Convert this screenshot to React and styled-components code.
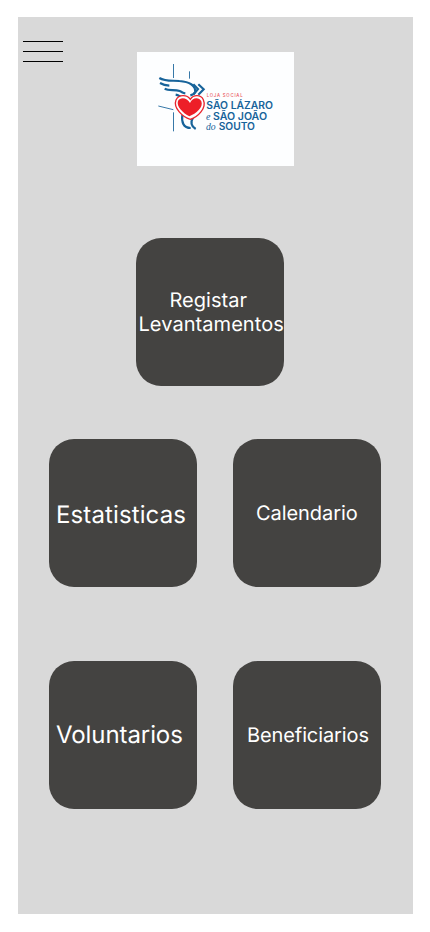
import React from "react";
import styled, { createGlobalStyle } from "styled-components";

const GlobalStyle = createGlobalStyle`
  *, *::before, *::after { box-sizing: border-box; }
  body { margin: 0; background: #fff; font-family: Inter, sans-serif; }
`;

const Screen = styled.main`
  width: 395px;
  height: 897px;
  margin: 17px 0 0 18px;
  background: #d9d9d9;
  display: flex;
  flex-direction: column;
`;

const Header = styled.header`
  display: flex;
  align-items: flex-start;
  height: 221px;
  padding: 24px 0 0 5px;
`;

const MenuButton = styled.button`
  display: flex;
  flex-direction: column;
  gap: 9px;
  width: 40px;
  padding: 0;
  border: 0;
  background: none;
`;

const MenuBar = styled.span`
  height: 1px;
  background: #000;
`;

const Logo = styled.svg`
  width: 157px;
  height: 114px;
  margin: 11px 0 0 74px;
  background: #fdfeff;
`;

const LogoName = styled.text`
  font: 600 30px Inter, sans-serif;
  fill: #17639a;
`;

const LogoJoin = styled.text`
  font: italic 30px "Liberation Serif", serif;
  fill: #17639a;
`;

const LogoTag = styled.text`
  font: 500 13px Inter, sans-serif;
  fill: #ea5560;
`;

const Featured = styled.div`
  display: flex;
  padding-left: 118px;
`;

const TileGrid = styled.nav`
  display: grid;
  grid-template-columns: 148px 148px;
  gap: 74px 36px;
  margin: 53px 0 0 31px;
`;

const Tile = styled.button`
  display: flex;
  align-items: center;
  justify-content: flex-start;
  width: 148px;
  height: 148px;
  padding: ${(p) => p.$drop || 0}px 0 ${(p) => p.$lift || 0}px ${(p) => p.$inset}px;
  border: 0;
  border-radius: 25px;
  background: #444341;
  color: #fff;
  font: 400 ${(p) => (p.$large ? 24 : 20)}px / ${(p) => (p.$large ? 29 : 24)}px Inter, sans-serif;
  letter-spacing: ${(p) => p.$tracking || 0}px;
  text-rendering: geometricPrecision;
  text-align: center;
  white-space: pre;
`;

const tiles = [
  { label: "Estatisticas", inset: 7, large: true, drop: 2, tracking: 0.12 },
  { label: "Calendario", inset: 23, tracking: -0.06 },
  { label: "Voluntarios", inset: 7, large: true, lift: 2, tracking: -0.08 },
  { label: "Beneficiarios", inset: 14, tracking: -0.1 },
];

function BrandLogo() {
  return (
    <Logo viewBox="21 21 471 342" role="img" aria-label="Loja Social São Lázaro e São João do Souto">
      <g fill="none" stroke="#17639a" strokeWidth="2.6">
        <path d="M130.5 57V99M178.5 79V101M130.5 202V259M85 183L130 194" />
      </g>
      <g fill="none" stroke="#17639a" strokeWidth="6.5">
        <path d="M88 99C106 110 127 106 148 108C179 110 199 123 195 141Q193 148 181 151" />
        <path d="M90 114Q102 121 118 122" />
        <path d="M104 131C117 139 134 132 149 138C158 142 158 144 166 145" />
        <path d="M137 149Q149 151 155 160" />
        <path d="M190 118L204 132L191 148M205 118L221 133L205 149" />
        <path d="M157 210C154 231 160 249 182 249" />
        <path d="M190 216C181 231 184 244 197 252" />
      </g>
      <path
        d="M181 163C190 148 213 148 220 164C231 190 203 216 181 223C157 216 129 188 138 165C146 148 171 148 181 163Z"
        fill="#fdfeff"
        stroke="#e9252d"
        strokeWidth="4"
      />
      <path
        d="M180 174C186 158 207 155 214 169C221 188 198 206 178 214C160 205 138 184 144 168C151 154 172 158 180 174Z"
        fill="#ed1f28"
      />
      <LogoTag x="230" y="157" textLength="108">LOJA SOCIAL</LogoTag>
      <LogoName x="229" y="192" textLength="200" lengthAdjust="spacingAndGlyphs">SÃO LÁZARO</LogoName>
      <LogoJoin x="228" y="224">e</LogoJoin>
      <LogoName x="249" y="224" textLength="162" lengthAdjust="spacingAndGlyphs">SÃO JOÃO</LogoName>
      <LogoJoin x="228" y="255" textLength="29" lengthAdjust="spacingAndGlyphs">do</LogoJoin>
      <LogoName x="266" y="255" textLength="109" lengthAdjust="spacingAndGlyphs">SOUTO</LogoName>
    </Logo>
  );
}

export default function App() {
  return (
    <>
      <GlobalStyle />
      <Screen>
        <Header>
          <MenuButton aria-label="Menu">
            <MenuBar />
            <MenuBar />
            <MenuBar />
          </MenuButton>
          <BrandLogo />
        </Header>
        <Featured>
          <Tile $inset={2.5} $tracking={0.06}>{"Registar \nLevantamentos"}</Tile>
        </Featured>
        <TileGrid>
          {tiles.map((t) => (
            <Tile
              key={t.label}
              $inset={t.inset}
              $large={t.large}
              $drop={t.drop}
              $lift={t.lift}
              $tracking={t.tracking}
            >
              {t.label}
            </Tile>
          ))}
        </TileGrid>
      </Screen>
    </>
  );
}
